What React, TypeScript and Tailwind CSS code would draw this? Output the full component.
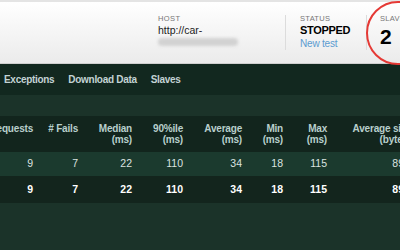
import React from "react";

const cols = [
  { label: ["# Requests"], w: "w-[73px]", v: "9" },
  { label: ["# Fails"], w: "w-[45px]", v: "7" },
  { label: ["Median", "(ms)"], w: "w-[54px]", v: "22" },
  { label: ["90%ile", "(ms)"], w: "w-[51px]", v: "110" },
  { label: ["Average", "(ms)"], w: "w-[59px]", v: "34" },
  { label: ["Min", "(ms)"], w: "w-[41px]", v: "18" },
  { label: ["Max", "(ms)"], w: "w-[44px]", v: "115" },
  { label: ["Average size", "(bytes)"], w: "w-[84px]", v: "89" },
];

const App = () => {
  return (
    <div className="w-[400px] h-[250px] overflow-hidden bg-[#1b3329] font-['Liberation_Sans',Arial,sans-serif]">
      {/* Header */}
      <div className="h-[2px] bg-[#e4e4e4]" />
      <header className="relative h-[62px] bg-gradient-to-b from-white to-[#ebebeb] border-b border-b-[#cfcfcf] flex">
        <div className="w-[158px] shrink-0" />
        <div className="w-[127px] shrink-0 pt-[13px]">
          <div className="text-[7.5px] leading-[8px] text-[#777] tracking-[0.4px]">HOST</div>
          <div className="mt-[1px] text-[10.5px] leading-[13px] text-[#222]">http://car-</div>
          <div className="mt-[1px] h-[8px] w-[80px] rounded-full bg-[#d2d2d2] blur-[1.5px]" />
        </div>
        <div className="w-px shrink-0 mt-[13px] mb-[13px] bg-[#dcdcdc]" />
        <div className="w-[80px] shrink-0 pl-[14px] pt-[13px]">
          <div className="text-[7.5px] leading-[8px] text-[#777] tracking-[0.3px]">STATUS</div>
          <div className="mt-[1px] text-[11px] leading-[13px] font-bold text-black tracking-[-0.3px]">STOPPED</div>
          <div className="text-[10px] leading-[13px] text-[#5b9bd0] tracking-[-0.2px]">New test</div>
        </div>
        <div className="w-px shrink-0 mt-[13px] mb-[13px] bg-[#dcdcdc]" />
        <div className="pl-[13px] pt-[13px]">
          <div className="text-[7.5px] leading-[8px] text-[#777] tracking-[0.3px]">SLAVES</div>
          <div className="mt-[2px] text-[21px] leading-[24px] font-bold text-black">2</div>
        </div>
        <div className="absolute left-[366px] top-[-1px] w-[64px] h-[64px] rounded-full border-2 border-[#e53935]" />
      </header>

      {/* Nav */}
      <nav className="h-[31px] bg-[#12281f] flex items-center gap-[14px] pl-[4px] text-[10px] font-bold tracking-[-0.3px] text-[#c3d3d4]">
        <span>Exceptions</span>
        <span>Download Data</span>
        <span>Slaves</span>
      </nav>

      <div className="h-[21px]" />

      {/* Table */}
      <div className="overflow-hidden">
        <div className="-ml-[40px] w-[520px]">
          <div className="h-[36px] pt-[7px] bg-[#12251d] flex items-start text-[10px] leading-[11px] font-bold tracking-[-0.2px] text-[#b8cfcc]">
            {cols.map((c) => (
              <div key={c.label[0]} className={`${c.w} shrink-0 text-right`}>
                {c.label.map((l) => (
                  <div key={l} className="whitespace-nowrap">{l}</div>
                ))}
              </div>
            ))}
          </div>
          <div className="h-[24px] bg-[#1b3a2e] flex items-center text-[10.5px] text-[#dbe3e0]">
            {cols.map((c) => (
              <div key={c.label[0]} className={`${c.w} shrink-0 text-right ${c.v === "89" ? "pr-[7px]" : ""}`}>
                {c.v}
              </div>
            ))}
          </div>
          <div className="h-[27px] bg-[#13251d] flex items-center text-[10.5px] font-bold text-white">
            {cols.map((c) => (
              <div key={c.label[0]} className={`${c.w} shrink-0 text-right ${c.v === "89" ? "pr-[7px]" : ""}`}>
                {c.v}
              </div>
            ))}
          </div>
        </div>
      </div>
    </div>
  );
};

export default App;
